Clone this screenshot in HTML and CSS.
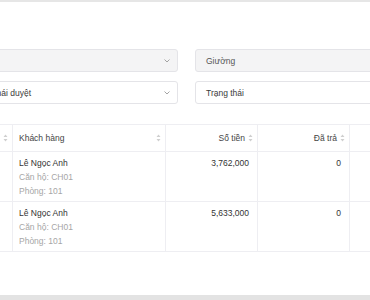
FILE: index.html
```html
<!DOCTYPE html>
<html lang="vi">
<head>
<meta charset="utf-8">
<link rel="stylesheet" href="styles.css">
</head>
<body>
<div class="topbar"></div>
<main class="content">
  <div class="filters">
    <div class="select disabled"><span class="val"></span>
      <svg class="chev" viewBox="0 0 6 4" width="6" height="4"><path d="M0.5 0.5 L3 3 L5.5 0.5" fill="none" stroke="#9a9a9a" stroke-width="0.9"/></svg></div>
    <div class="select disabled"><span class="val muted">Giường</span></div>
    <div class="select"><span class="val">Trạng thái duyệt</span>
      <svg class="chev" viewBox="0 0 6 4" width="6" height="4"><path d="M0.5 0.5 L3 3 L5.5 0.5" fill="none" stroke="#9a9a9a" stroke-width="0.9"/></svg></div>
    <div class="select"><span class="val">Trạng thái</span></div>
  </div>

  <table class="grid">
    <colgroup>
      <col class="c0"><col class="c1"><col class="c2"><col class="c3"><col class="c4">
    </colgroup>
    <thead>
      <tr>
        <th><div class="th right"><span></span><svg class="sort" viewBox="0 0 5 8" width="5" height="8"><path d="M2.5 0.5 L4.5 3 L0.5 3 Z M2.5 7.5 L4.5 5 L0.5 5 Z" fill="#cfcfcf"/></svg></div></th>
        <th><div class="th"><span>Khách hàng</span><svg class="sort" viewBox="0 0 5 8" width="5" height="8"><path d="M2.5 0.5 L4.5 3 L0.5 3 Z M2.5 7.5 L4.5 5 L0.5 5 Z" fill="#cfcfcf"/></svg></div></th>
        <th><div class="th right"><span>Số tiền</span><svg class="sort" viewBox="0 0 5 8" width="5" height="8"><path d="M2.5 0.5 L4.5 3 L0.5 3 Z M2.5 7.5 L4.5 5 L0.5 5 Z" fill="#cfcfcf"/></svg></div></th>
        <th><div class="th right"><span>Đã trả</span><svg class="sort" viewBox="0 0 5 8" width="5" height="8"><path d="M2.5 0.5 L4.5 3 L0.5 3 Z M2.5 7.5 L4.5 5 L0.5 5 Z" fill="#cfcfcf"/></svg></div></th>
        <th></th>
      </tr>
    </thead>
    <tbody>
      <tr>
        <td></td>
        <td><div class="name">Lê Ngọc Anh</div><div class="sub">Căn hộ: CH01</div><div class="sub">Phòng: 101</div></td>
        <td class="num">3,762,000</td>
        <td class="num">0</td>
        <td></td>
      </tr>
      <tr>
        <td></td>
        <td><div class="name">Lê Ngọc Anh</div><div class="sub">Căn hộ: CH01</div><div class="sub">Phòng: 101</div></td>
        <td class="num">5,633,000</td>
        <td class="num">0</td>
        <td></td>
      </tr>
    </tbody>
  </table>
</main>
<div class="bottombar"></div>
</body>
</html>
```
FILE: styles.css
```css
html, body {
  margin: 0;
  padding: 0;
  background: #ffffff;
  overflow: hidden;
}
body {
  font-family: "Liberation Sans", Arial, sans-serif;
  font-size: 8.5px;
  color: #333333;
  width: 370px;
  height: 300px;
  display: flex;
  flex-direction: column;
}
.topbar {
  height: 2px;
  background: #e6e6e6;
  flex: none;
}
.content {
  flex: 1;
  padding-top: 47px;
  margin-left: -41px;
}
.filters {
  display: grid;
  grid-template-columns: 219px 219px;
  column-gap: 17px;
  row-gap: 9px;
}
.select {
  box-sizing: border-box;
  height: 23px;
  border: 1px solid #e4e4e8;
  border-radius: 3px;
  background: #ffffff;
  display: flex;
  align-items: center;
  justify-content: space-between;
  padding: 0 7px 0 10px;
}
.select.disabled {
  background: #f4f4f5;
}
.val {
  color: #3a3a3a;
  white-space: nowrap;
}
.val.muted {
  color: #555555;
}
.chev {
  display: block;
}
.grid {
  margin-top: 20px;
  border-collapse: collapse;
  table-layout: fixed;
  width: 480px;
}
.c0 { width: 53px; }
.c1 { width: 153px; }
.c2 { width: 92px; }
.c3 { width: 92px; }
.c4 { width: 90px; }
.grid th, .grid td {
  border: 1px solid #eeeef2;
  padding: 0;
}
.grid thead th {
  height: 26px;
  font-weight: normal;
  color: #444444;
  text-align: left;
}
.th {
  display: flex;
  align-items: center;
  justify-content: space-between;
  padding: 0 4px 0 6px;
  gap: 3px;
}
.th.right {
  justify-content: flex-end;
}
.sort {
  display: block;
  flex: none;
}
.grid tbody td {
  height: 50px;
  vertical-align: top;
  padding: 4px 6px 2px;
  line-height: 14px;
  box-sizing: border-box;
}
.name {
  color: #333333;
}
.sub {
  color: #a6a6a6;
}
.grid td.num {
  text-align: right;
  padding-right: 8px;
}
.bottombar {
  height: 5px;
  background: #e3e3e3;
  flex: none;
}
```
